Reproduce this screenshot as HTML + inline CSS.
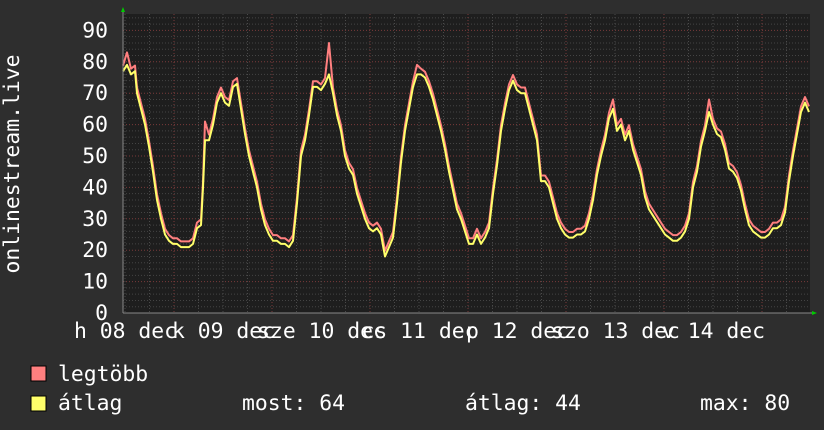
<!DOCTYPE html>
<html><head><meta charset="utf-8"><style>
html,body{margin:0;padding:0;background:#2e2e2e;width:824px;height:430px;overflow:hidden}
svg{display:block}
text{font-family:"DejaVu Sans Mono","Liberation Mono",monospace;font-size:21.4px;fill:#fff}
</style></head><body>
<svg id="s" width="824" height="430" xmlns="http://www.w3.org/2000/svg">
<rect x="0" y="0" width="824" height="430" fill="#2e2e2e"/>
<rect x="123" y="14" width="687" height="299" fill="#1e1e1e"/>
<g id="grid"></g>
<polyline id="red" fill="none" stroke="#ff7f7f" stroke-width="2" stroke-linejoin="round"/>
<polyline id="yel" fill="none" stroke="#ffff6a" stroke-width="2" stroke-linejoin="round"/>
<line x1="123" y1="313" x2="812" y2="313" stroke="#888" stroke-width="1"/>
<line x1="123" y1="313" x2="123" y2="12" stroke="#888" stroke-width="1"/>
<polygon points="121,12 125,12 123,7" fill="#0c0"/>
<polygon points="812,311 812,315 817,313" fill="#0c0"/>
<g text-anchor="end" id="ylab"></g>
<text transform="translate(19,164) rotate(-90)" text-anchor="middle">onlinestream.live</text>
<g id="xlab" text-anchor="middle"></g>
<rect x="31" y="366" width="15" height="15" fill="#ff7f7f" stroke="#000"/>
<rect x="31" y="396" width="15" height="15" fill="#ffff6a" stroke="#000"/>
<text x="58" y="381">legtöbb</text>
<text x="58" y="410">átlag</text>
<text x="242" y="410">most: 64</text>
<text x="465" y="410">átlag: 44</text>
<text x="700" y="410">max: 80</text>
</svg>
<script>
var NS="http://www.w3.org/2000/svg";
function el(t,a,p){var e=document.createElementNS(NS,t);for(var k in a)e.setAttribute(k,a[k]);p.appendChild(e);return e;}
var g=document.getElementById('grid');
function Y(v){return 313-v*3.14;}
for(var v=2;v<96;v+=2){var y=Y(v);el('line',{x1:123,x2:810,y1:y,y2:y,stroke:(v%10==0)?'#7a3a3a':'#444','stroke-dasharray':'1,2','stroke-width':1},g);}
for(var x=125;x<810;x+=24.5){var maj=Math.abs(((x-174)/98)-Math.round((x-174)/98))<0.01;el('line',{x1:x,x2:x,y1:14,y2:313,stroke:maj?'#7a3a3a':'#4a4a4a','stroke-dasharray':'1,2'},g);}
var yl=document.getElementById('ylab');
for(var v=0;v<=90;v+=10){var t=el('text',{x:108,y:Y(v)+7},yl);t.textContent=v;}
var xl=document.getElementById('xlab');
var labs=["h 08 dec","k 09 dec","sze 10 dec","cs 11 dec","p 12 dec","szo 13 dec","v 14 dec"];
labs.forEach(function(l,i){var t=el('text',{x:125.5+98*i,y:338},xl);t.textContent=l;});
var d=[123,77,127,79,131,76,135,77,137,70,141,65,145,60,149,53,153,45,157,36,161,30,165,25,169,23,173,22,177,22,181,21,185,21,189,21,193,22,197,27,201,28,203,40,205,55,209,55,213,60,217,67,221,70,225,67,229,66,233,72,237,73,241,65,245,57,249,50,253,45,257,40,261,33,265,28,269,25,273,23,277,23,281,22,285,22,289,21,293,23,297,35,301,50,305,55,309,63,313,72,317,72,321,71,325,73,329,76,333,70,337,63,341,58,345,50,349,46,353,44,357,38,361,34,365,30,369,27,373,26,377,27,381,25,385,18,389,21,393,24,397,35,401,48,405,58,409,65,413,72,417,76,421,76,425,75,429,72,433,68,437,63,441,58,445,52,449,45,453,39,457,33,461,30,465,26,469,22,473,22,477,25,481,22,485,24,489,27,493,38,497,47,501,58,505,65,509,71,513,74,517,71,521,70,525,70,529,65,533,60,537,55,541,42,545,42,549,40,553,35,557,30,561,27,565,25,569,24,573,24,577,25,581,25,585,26,589,30,593,36,597,44,601,50,605,55,609,62,613,65,617,58,621,60,625,55,629,58,633,52,637,48,641,44,645,37,649,33,653,31,657,29,661,27,665,25,669,24,673,23,677,23,681,24,685,26,689,30,693,40,697,45,701,53,705,58,709,64,713,60,717,57,721,56,725,52,729,46,733,45,737,43,741,39,745,33,749,28,753,26,757,25,761,24,765,24,769,25,773,27,777,27,781,28,785,32,789,42,793,50,797,57,801,64,805,67,809,64];
var py=[],pr=[];var spikes={127:83,205:61,329:86,417:79,613:68,709:68};
for(var i=0;i<d.length;i+=2){var x=d[i],v=d[i+1];py.push(x+","+Y(v).toFixed(1));var r=spikes[x]||(v+1.8);pr.push(x+","+Y(r).toFixed(1));}
document.getElementById('yel').setAttribute('points',py.join(' '));
document.getElementById('red').setAttribute('points',pr.join(' '));
</script>
</body></html>
